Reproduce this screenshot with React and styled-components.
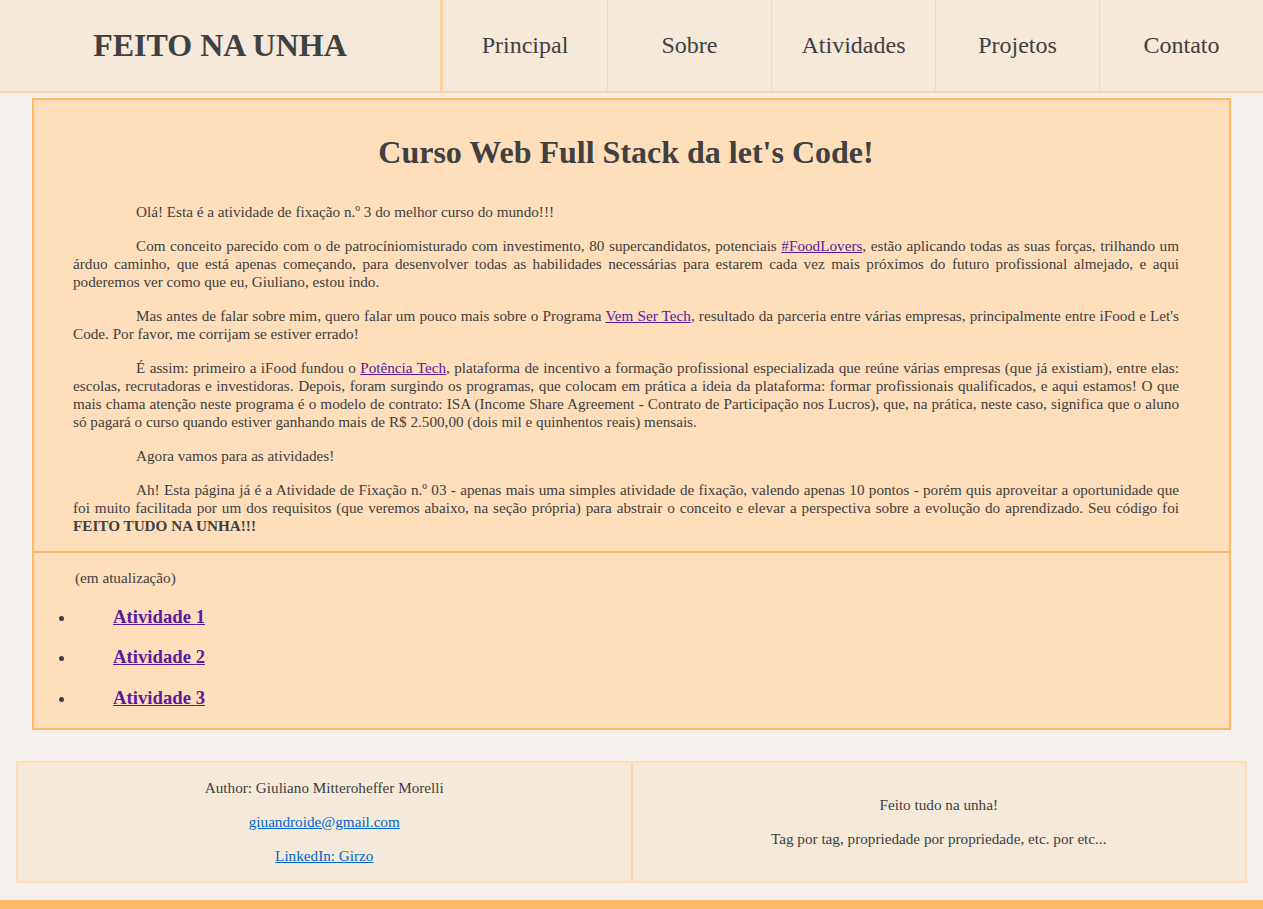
import React from 'react'
import styled, { createGlobalStyle } from 'styled-components'

const GlobalStyle = createGlobalStyle`
  body {
    margin: 0;
    background: #f4efea;
    font-family: 'Liberation Serif', 'Times New Roman', serif;
    color: #404040;
  }
`

const Header = styled.header`
  display: flex;
  height: 91px;
  background: #f5e9d9;
  border-bottom: 2px solid #ffd39e;
`

const Logo = styled.div`
  width: 440px;
  display: flex;
  align-items: center;
  justify-content: center;
  border-right: 3px solid #ffd39e;
  font-size: 32px;
  font-weight: bold;
`

const Nav = styled.nav`
  flex: 1;
  display: grid;
  grid-template-columns: repeat(5, 1fr);
`

const NavItem = styled.a`
  display: flex;
  align-items: center;
  justify-content: center;
  font-size: 24px;
  color: #404040;
  text-decoration: none;
  border-left: ${(p) => (p.$first ? 'none' : '1px solid #ffd8a6')};
`

const Main = styled.main`
  margin: 5px 32px 0;
  background: #fedebb;
  border: 2px solid #ffb863;
`

const Intro = styled.section`
  padding: 0 50px 0 39px;
  border-bottom: 2px solid #ffb863;

  h1 {
    margin: 34px 0 32px;
    font-size: 32px;
    line-height: 37px;
    text-align: center;
  }
`

const Para = styled.p`
  margin: 16px 0;
  font-size: 15.2px;
  line-height: 18px;
  text-align: justify;
  text-indent: 63px;
`

const TextLink = styled.a`
  color: #5a1a9c;
`

const Activities = styled.section`
  padding: 0 0 0 41px;
`

const Note = styled.p`
  margin: 16px 0;
  font-size: 15.2px;
  line-height: 18px;
`

const List = styled.ul`
  margin: 16px 0;
  padding-left: 0;
  font-size: 16px;

  h3 {
    margin: 18.72px 0;
    padding-left: 38px;
    font-size: 18.72px;
  }
`

const ActivityLink = styled.a`
  color: #5a1a9c;
`

const Footer = styled.footer`
  margin: 31px 16px 0;
  display: grid;
  grid-template-columns: 1fr 2px 1fr;
  background: #f5e9d9;
  border: 2px solid #ffdcb2;
`

const Divider = styled.div`
  background: #ffd39e;
`

const FooterCol = styled.div`
  display: flex;
  flex-direction: column;
  justify-content: center;
  align-items: center;
  gap: 16px;
  padding: 16px 0;
  text-align: center;

  p {
    margin: 0;
    font-size: 15.2px;
    line-height: 18px;
  }
`

const MailLink = styled.a`
  color: #0066cc;
`

const BottomBar = styled.div`
  height: 16px;
  margin-top: 17px;
  background: #ffb863;
`

const navItems = ['Principal', 'Sobre', 'Atividades', 'Projetos', 'Contato']

export default function App() {
  return (
    <>
      <GlobalStyle />
      <Header>
        <Logo>FEITO NA UNHA</Logo>
        <Nav>
          {navItems.map((item, i) => (
            <NavItem key={item} href="#" $first={i === 0}>
              {item}
            </NavItem>
          ))}
        </Nav>
      </Header>

      <Main>
        <Intro>
          <h1>Curso Web Full Stack da let's Code!</h1>
          <Para>Olá! Esta é a atividade de fixação n.º 3 do melhor curso do mundo!!!</Para>
          <Para>
            Com conceito parecido com o de patrocíniomisturado com investimento, 80
            supercandidatos, potenciais <TextLink href="#">#FoodLovers</TextLink>, estão
            aplicando todas as suas forças, trilhando um árduo caminho, que está apenas
            começando, para desenvolver todas as habilidades necessárias para estarem cada
            vez mais próximos do futuro profissional almejado, e aqui poderemos ver como que
            eu, Giuliano, estou indo.
          </Para>
          <Para>
            Mas antes de falar sobre mim, quero falar um pouco mais sobre o Programa{' '}
            <TextLink href="#">Vem Ser Tech</TextLink>, resultado da parceria entre várias
            empresas, principalmente entre iFood e Let's Code. Por favor, me corrijam se
            estiver errado!
          </Para>
          <Para>
            É assim: primeiro a iFood fundou o <TextLink href="#">Potência Tech</TextLink>,
            plataforma de incentivo a formação profissional especializada que reúne várias
            empresas (que já existiam), entre elas: escolas, recrutadoras e investidoras.
            Depois, foram surgindo os programas, que colocam em prática a ideia da
            plataforma: formar profissionais qualificados, e aqui estamos! O que mais chama
            atenção neste programa é o modelo de contrato: ISA (Income Share Agreement -
            Contrato de Participação nos Lucros), que, na prática, neste caso, significa que
            o aluno só pagará o curso quando estiver ganhando mais de R$ 2.500,00 (dois mil
            e quinhentos reais) mensais.
          </Para>
          <Para>Agora vamos para as atividades!</Para>
          <Para>
            Ah! Esta página já é a Atividade de Fixação n.º 03 - apenas mais uma simples
            atividade de fixação, valendo apenas 10 pontos - porém quis aproveitar a
            oportunidade que foi muito facilitada por um dos requisitos (que veremos abaixo,
            na seção própria) para abstrair o conceito e elevar a perspectiva sobre a
            evolução do aprendizado. Seu código foi <b>FEITO TUDO NA UNHA!!!</b>
          </Para>
        </Intro>

        <Activities>
          <Note>(em atualização)</Note>
          <List>
            {[1, 2, 3].map((n) => (
              <li key={n}>
                <h3>
                  <ActivityLink href="#">Atividade {n}</ActivityLink>
                </h3>
              </li>
            ))}
          </List>
        </Activities>
      </Main>

      <Footer>
        <FooterCol>
          <p>Author: Giuliano Mitteroheffer Morelli</p>
          <p>
            <MailLink href="#">giuandroide@gmail.com</MailLink>
          </p>
          <p>
            <MailLink href="#">LinkedIn: Girzo</MailLink>
          </p>
        </FooterCol>
        <Divider />
        <FooterCol>
          <p>Feito tudo na unha!</p>
          <p>Tag por tag, propriedade por propriedade, etc. por etc...</p>
        </FooterCol>
      </Footer>
      <BottomBar />
    </>
  )
}
